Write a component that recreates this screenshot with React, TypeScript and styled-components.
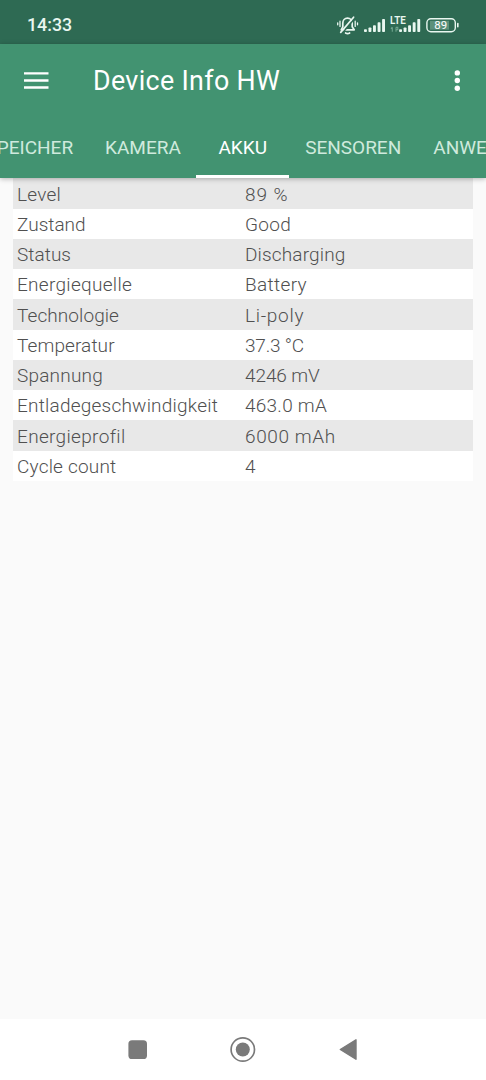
import React from "react";
import styled, { createGlobalStyle } from "styled-components";

const Global = createGlobalStyle`
  *, *::before, *::after { box-sizing: border-box; }
  html, body { margin: 0; padding: 0; background: #fafafa; overflow: hidden; }
`;

const Screen = styled.div`
  width: 486px;
  height: 1080px;
  display: flex;
  flex-direction: column;
  overflow: hidden;
  background: #fafafa;
  font-family: Roboto, "Noto Sans", sans-serif;
`;

const StatusBar = styled.header`
  height: 44px;
  flex: none;
  display: flex;
  align-items: center;
  justify-content: space-between;
  padding: 6px 26px 0 27px;
  background: #2e6a53;
  color: #e9f7f0;
`;

const Clock = styled.time`
  font-size: 17.8px;
  font-weight: 500;
  line-height: 20px;
  letter-spacing: 0;
`;

const StatusIcons = styled.div`
  display: flex;
  align-items: center;
`;

const Header = styled.div`
  flex: none;
  height: 134px;
  display: flex;
  flex-direction: column;
  background: #429371;
  color: #fff;
  box-shadow: 0 1px 5px rgba(0, 0, 0, 0.28);
  z-index: 1;
`;

const Toolbar = styled.div`
  height: 73px;
  display: flex;
  align-items: center;
  padding: 0 20px 0 24px;
`;

const IconButton = styled.button`
  display: flex;
  padding: 0;
  border: 0;
  background: none;
  color: inherit;
`;

const Title = styled.h1`
  flex: 1;
  margin: 1px 0 0 44px;
  font-size: 26.8px;
  font-weight: 400;
  line-height: 32px;
  letter-spacing: 0.35px;
`;

const Tabs = styled.nav`
  flex: 1;
  display: flex;
  margin-left: -31px;
  width: 620px;
`;

const Tab = styled.div<{ $width: number; $active?: boolean }>`
  flex: none;
  width: ${(p) => p.$width}px;
  display: flex;
  justify-content: center;
  padding-top: 19px;
  font-size: 19px;
  font-weight: 400;
  line-height: 24px;
  letter-spacing: 0;
  white-space: nowrap;
  color: ${(p) => (p.$active ? "#fff" : "#cfeadd")};
  border-bottom: 3px solid ${(p) => (p.$active ? "#fff" : "transparent")};
`;

const List = styled.dl`
  flex: 1;
  margin: 0;
  padding: 0.4px 13px 0;
`;

const Row = styled.div`
  height: 30.25px;
  display: grid;
  grid-template-columns: 228px 1fr;
  align-items: center;
  padding: 2.4px 0 0 4px;
  font-size: 19px;
  font-weight: 300;
  line-height: 24px;
  color: #505050;
  background: #fff;
  &:nth-child(odd) { background: #e8e8e8; }
`;

const Term = styled.dt<{ $spacing: number }>`
  letter-spacing: ${(p) => p.$spacing}px;
  white-space: nowrap;
`;

const Value = styled.dd<{ $spacing: number }>`
  margin: 0;
  letter-spacing: ${(p) => p.$spacing}px;
  white-space: nowrap;
`;

const NavBar = styled.footer`
  flex: none;
  height: 61px;
  display: flex;
  justify-content: space-between;
  align-items: center;
  padding: 0 125px 0 125px;
  background: #fff;
`;

const rows: [string, number, string, number][] = [
  ["Level", 0.25, "89 %", 0.9],
  ["Zustand", 0, "Good", 0.3],
  ["Status", 0.05, "Discharging", 0.15],
  ["Energiequelle", 0.3, "Battery", 0.35],
  ["Technologie", 0.08, "Li-poly", 0.7],
  ["Temperatur", 0.1, "37.3 °C", -0.2],
  ["Spannung", 0.2, "4246 mV", -0.1],
  ["Entladegeschwindigkeit", 0.22, "463.0 mA", 0.25],
  ["Energieprofil", 0.33, "6000 mAh", 0.6],
  ["Cycle count", 0.2, "4", 0],
];

const StatusGlyphs = () => (
  <svg width="124" height="24" viewBox="336 13 124 24" fill="none">
    <g stroke="#e9f7f0" strokeWidth="1.7" strokeLinecap="round" strokeLinejoin="round">
      <path d="M341.2 29.8h13l-2-3v-3.6c0-3-2-5-4.7-5s-4.7 2-4.7 5v3.6z" />
      <path d="M345.6 33c1.2.8 2.8.8 4 0" />
      <path d="M342.4 33L355.2 17.8" stroke="#2e6a53" strokeWidth="1.6" />
      <path d="M340.7 32.4L353.6 17.2" />
      <path d="M340 21.2v5.2M337.7 22.8v2M355.2 21.2v5.2M357.5 22.8v2" strokeWidth="1.3" />
    </g>
    <g fill="#e9f7f0">
      <rect x="364" y="29.3" width="2.9" height="2.7" rx=".8" />
      <rect x="368.5" y="27.4" width="2.9" height="4.6" rx=".8" />
      <rect x="373" y="25.2" width="2.9" height="6.8" rx=".8" />
      <rect x="377.6" y="22.2" width="2.9" height="9.8" rx=".8" />
      <rect x="382.1" y="19" width="2.9" height="13" rx=".8" />
      <rect x="399.1" y="29.3" width="2.9" height="2.7" rx=".8" />
      <rect x="403.6" y="27.4" width="2.9" height="4.6" rx=".8" />
      <rect x="408.1" y="25.2" width="2.9" height="6.8" rx=".8" />
      <rect x="412.7" y="22.2" width="2.9" height="9.8" rx=".8" />
      <rect x="417.3" y="19" width="2.9" height="13" rx=".8" />
      <text x="390" y="24.3" fontSize="10.2" fontWeight="600" textLength="15.8" lengthAdjust="spacingAndGlyphs" fontFamily="Roboto">LTE</text>
    </g>
    <path d="M392.3 31.8v-4.6M391 28.8l1.3-1.6M396 27.2v4.6M396 27.4h1.8v2.2H396" stroke="#6fa48d" strokeWidth="1.1" />
    <rect x="430" y="20.8" width="19" height="8.9" fill="#5c917b" />
    <rect x="426.9" y="18.7" width="28.4" height="13" rx="4" stroke="#e9f7f0" strokeWidth="1.4" />
    <path d="M457.8 23.6v3.2" stroke="#e9f7f0" strokeWidth="1.6" strokeLinecap="round" />
    <text x="434.3" y="29.3" fontSize="11.4" fontWeight="400" textLength="12.8" fill="#fff" fontFamily="Roboto">89</text>
  </svg>
);

export default function App() {
  return (
    <Screen>
      <Global />
      <StatusBar>
        <Clock>14:33</Clock>
        <StatusIcons><StatusGlyphs /></StatusIcons>
      </StatusBar>
      <Header>
        <Toolbar>
          <IconButton aria-label="Menu">
            <svg width="25" height="20" viewBox="0 0 25 20" fill="#fff">
              <path d="M0 1.2h24.5v2.4H0zM0 8.3h24.5v2.4H0zM0 15.3h24.5v2.4H0z" />
            </svg>
          </IconButton>
          <Title>Device Info HW</Title>
          <IconButton aria-label="More">
            <svg width="18" height="24" viewBox="0 0 18 24" fill="#fff">
              <circle cx="9.3" cy="3.9" r="2.7" />
              <circle cx="9.3" cy="11.5" r="2.7" />
              <circle cx="9.3" cy="19.2" r="2.7" />
            </svg>
          </IconButton>
        </Toolbar>
        <Tabs>
          <Tab $width={120.6}>SPEICHER</Tab>
          <Tab $width={106.6}>KAMERA</Tab>
          <Tab $width={93} $active>AKKU</Tab>
          <Tab $width={128}>SENSOREN</Tab>
          <Tab $width={175}>ANWENDUNGEN</Tab>
        </Tabs>
      </Header>
      <List>
        {rows.map(([term, ts, value, vs]) => (
          <Row key={term}>
            <Term $spacing={ts}>{term}</Term>
            <Value $spacing={vs}>{value}</Value>
          </Row>
        ))}
      </List>
      <NavBar>
        <svg width="25" height="30" viewBox="0 0 25 30">
          <rect x="3.4" y="5.2" width="18.6" height="18.8" rx="3.6" fill="#7a7a7a" />
        </svg>
        <svg width="28" height="30" viewBox="0 0 28 30">
          <circle cx="13.8" cy="14.5" r="11.7" fill="none" stroke="#7a7a7a" strokeWidth="1.7" />
          <circle cx="13.8" cy="14.5" r="7" fill="#7a7a7a" />
        </svg>
        <svg width="25" height="30" viewBox="0 0 25 30">
          <path d="M4.3 14.5L20 4.8V24.2z" fill="#7a7a7a" stroke="#7a7a7a" strokeWidth="1.4" strokeLinejoin="round" />
        </svg>
      </NavBar>
    </Screen>
  );
}
